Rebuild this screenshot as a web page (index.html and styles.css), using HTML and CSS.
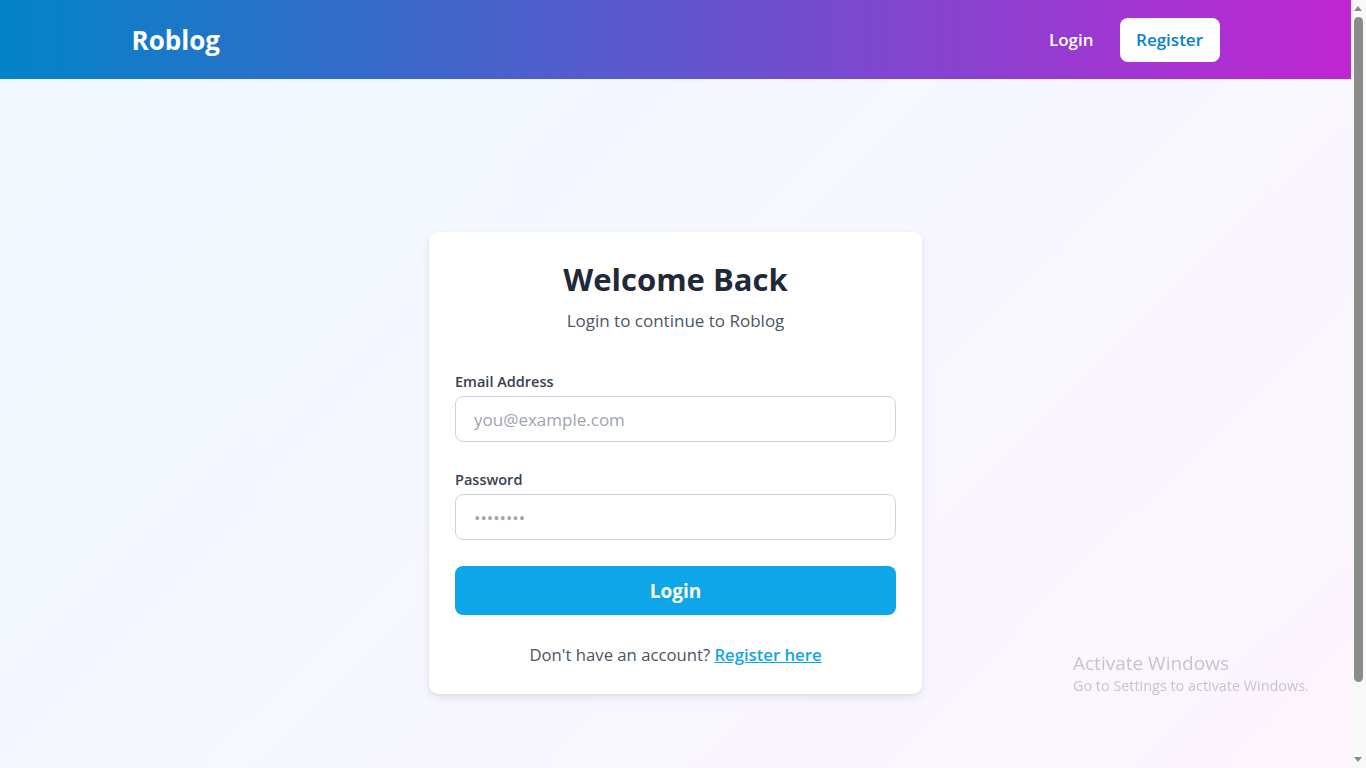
FILE: index.html
```html
<!DOCTYPE html>
<html lang="en">
<head>
  <meta charset="UTF-8">
  <meta name="viewport" content="width=device-width, initial-scale=1.0">
  <title>Login - Roblog</title>
  <link rel="stylesheet" href="styles.css">
</head>
<body>
  <header class="navbar">
    <div class="container nav-inner">
      <a href="#" class="brand">Roblog</a>
      <nav class="nav-links">
        <a href="#" class="nav-link">Login</a>
        <a href="#" class="nav-btn">Register</a>
      </nav>
    </div>
  </header>

  <!-- login card -->
  <main class="page">
    <div class="card">
      <h1 class="card-title">Welcome Back</h1>
      <p class="card-sub">Login to continue to Roblog</p>

      <form class="login-form" onsubmit="return false;">
        <div class="field">
          <label for="email">Email Address</label>
          <input type="email" id="email" placeholder="you@example.com">
        </div>
        <div class="field">
          <label for="password">Password</label>
          <input type="password" id="password" placeholder="••••••••">
        </div>
        <button type="submit" class="submit-btn">Login</button>
      </form>

      <p class="switch">Don't have an account? <a href="#">Register here</a></p>
    </div>
  </main>

  <div class="watermark">
    <div class="wm-title">Activate Windows</div>
    <div class="wm-sub">Go to Settings to activate Windows.</div>
  </div>

  <!-- window scrollbar -->
  <div class="scrollbar">
    <span class="sb-up"></span>
    <span class="sb-thumb"></span>
    <span class="sb-down"></span>
  </div>
</body>
</html>
```

FILE: styles.css
```css
* {
  box-sizing: border-box;
}

body {
  margin: 0;
  padding-right: 15px;
  font-family: "Open Sans", "Noto Sans", sans-serif;
  color: #1f2937;
  background: linear-gradient(135deg, #f0f9ff 0%, #fdf4ff 100%);
  min-height: 100vh;
}

a {
  text-decoration: none;
}

.container {
  max-width: 1152px;
  margin: 0 auto;
  padding: 0 32px;
}

.navbar {
  background: linear-gradient(90deg, #0284c7 0%, #c026d3 100%);
  height: 79px;
}

.nav-inner {
  height: 100%;
  display: flex;
  align-items: center;
  justify-content: space-between;
}

.brand {
  color: #fff;
  font-size: 26px;
  font-weight: 700;
}

.nav-links {
  display: flex;
  align-items: center;
  gap: 26px;
}

.nav-link {
  color: #fff;
  font-size: 17px;
  font-weight: 600;
}

.nav-btn {
  background: #fff;
  color: #0284c7;
  font-size: 17px;
  font-weight: 600;
  padding: 10px 16.5px 11px;
  border-radius: 8px;
}

.page {
  min-height: 768px;
  display: flex;
  align-items: center;
  justify-content: center;
}

.card {
  width: 493px;
  background: #fff;
  border-radius: 9px;
  box-shadow: 0 4px 10px rgba(0, 0, 0, 0.08), 0 1px 3px rgba(0, 0, 0, 0.06);
  padding: 29px 26px 28px;
}

.card-title {
  margin: 0;
  text-align: center;
  font-size: 31px;
  font-weight: 700;
  color: #1f2937;
  line-height: 1.2;
}

.card-sub {
  margin: 11px 0 0;
  text-align: center;
  font-size: 17px;
  color: #4b5563;
}

.login-form {
  margin-top: 40px;
}

.field {
  margin-bottom: 26px;
}

.field + .field {
  margin-top: 28px;
}

.field label {
  display: block;
  font-size: 14.5px;
  font-weight: 600;
  color: #374151;
  margin-bottom: 5px;
}

.field input {
  width: 100%;
  height: 46px;
  border: 1px solid #d1d5db;
  border-radius: 8px;
  padding: 0 18px;
  font-family: inherit;
  font-size: 17px;
  color: #1f2937;
  outline: none;
}

.field input::placeholder {
  color: #9ca3af;
}

.submit-btn {
  width: 100%;
  height: 49px;
  border: none;
  border-radius: 8px;
  background: #0ea5e9;
  color: #fff;
  font-family: inherit;
  font-size: 19px;
  font-weight: 700;
  cursor: pointer;
}

.submit-btn:hover {
  background: #0284c7;
}

.switch {
  margin: 28px 0 0;
  text-align: center;
  font-size: 16.7px;
  color: #4b5563;
}

.switch a {
  color: #0ea5e9;
  font-weight: 600;
  text-decoration: underline;
}

.watermark {
  position: fixed;
  left: 1073px;
  top: 650px;
  color: #c6c4ca;
}

.wm-title {
  font-size: 19px;
}

.wm-sub {
  font-size: 14.4px;
}

.scrollbar {
  position: fixed;
  top: 0;
  right: 0;
  width: 15px;
  height: 100vh;
  background: #f8f8f8;
}

.sb-thumb {
  position: absolute;
  left: 3px;
  top: 17px;
  width: 9px;
  height: 665px;
  background: #8b8b8b;
  border-radius: 5px;
}

.sb-up,
.sb-down {
  position: absolute;
  left: 3px;
  width: 0;
  height: 0;
  border-left: 4.5px solid transparent;
  border-right: 4.5px solid transparent;
}

.sb-up {
  top: 6px;
  border-bottom: 5px solid #8b8b8b;
}

.sb-down {
  bottom: 6px;
  border-top: 5px solid #8b8b8b;
}
```
